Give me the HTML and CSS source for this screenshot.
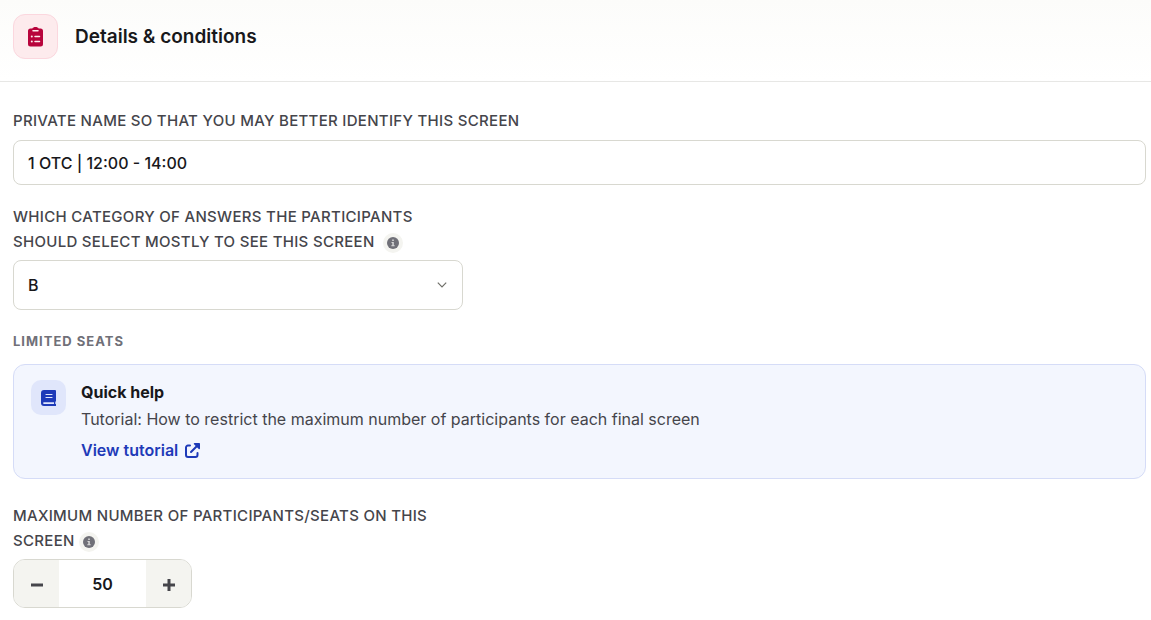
FILE: index.html
```html
<!DOCTYPE html>
<html lang="en">

<head>
    <meta charset="UTF-8">
    <meta name="viewport" content="width=device-width, initial-scale=1.0">
    <title>Details &amp; conditions</title>
    <link rel="stylesheet" href="styles.css">
</head>

<body>
    <header class="panel-header">
        <span class="panel-icon">
            <svg width="15" height="20" viewBox="0 0 15 20" aria-hidden="true">
                <path fill="#b8043c" d="M2.500 1.500h1.800C5 .5 6 0 7.500 0s2.500.5 3.200 1.500h1.800A2.500 2.500 0 0 1 15 4v13a2.500 2.500 0 0 1-2.500 2.500h-10A2.500 2.500 0 0 1 0 17V4a2.500 2.500 0 0 1 2.500-2.500z" />
                <path stroke="#fdebed" stroke-width="1.500" stroke-linecap="round" d="M5 3.800h5M7 9.500h4.500M7 14.500h4.500" />
                <circle cx="3.800" cy="9.500" r="1" fill="#fdebed" />
                <circle cx="3.800" cy="14.500" r="1" fill="#fdebed" />
            </svg>
        </span>
        <h1>Details &amp; conditions</h1>
    </header>

    <form class="panel-body">
        <div class="field">
            <label for="privateName">Private name so that you may better identify this screen</label>
            <input id="privateName" class="text-input" type="text" value="1 OTC | 12:00 - 14:00">
        </div>

        <div class="field narrow">
            <label for="category">Which category of answers the participants should select mostly to see this screen
                <span class="info">
                    <svg width="12" height="12" viewBox="0 0 12 12" aria-hidden="true">
                        <circle cx="6" cy="6" r="6" fill="#707078" />
                        <path fill="#d8d8d8" d="M5.200 2.500h1.600v1.500H5.200zM4.500 5h2.300v3.200h.9v1H4.300v-1h1V6h-.8z" />
                    </svg>
                </span>
            </label>
            <div class="select-wrap">
                <select id="category">
                    <option>A</option>
                    <option selected>B</option>
                    <option>C</option>
                </select>
                <svg class="chevron" width="10" height="6" viewBox="0 0 10 6" aria-hidden="true">
                    <path fill="none" stroke="#6f6f68" stroke-width="1.200" d="M.8.7 5 4.900 9.200.7" />
                </svg>
            </div>
        </div>

        <h2>Limited seats</h2>
        <section class="help">
            <span class="help-icon">
                <svg width="15" height="16" viewBox="0 0 15 16" aria-hidden="true">
                    <path fill="#1e3ab8" d="M3 0h11a1 1 0 0 1 1 1v9.800a1 1 0 0 1-.7 1v2.200H15V16H3a3 3 0 0 1-3-3V3a3 3 0 0 1 3-3z" />
                    <path stroke="#e0e6fb" stroke-width="1.200" stroke-linecap="round" d="M5 4.500h6M5 7.500h6" />
                    <path fill="#e0e6fb" d="M3 12.200h10v1.800H3a.9.9 0 0 1 0-1.800z" />
                </svg>
            </span>
            <div class="help-text">
                <h3>Quick help</h3>
                <p>Tutorial: How to restrict the maximum number of participants for each final screen</p>
                <a href="#tutorial">View tutorial
                    <svg width="15" height="15" viewBox="0 0 15 15" aria-hidden="true">
                        <path fill="none" stroke="#1e3ab8" stroke-width="2" stroke-linecap="round" d="M5 2.500H3a2 2 0 0 0-2 2V12a2 2 0 0 0 2 2h7.500a2 2 0 0 0 2-2v-2M6 9l6-6" />
                        <path fill="#1e3ab8" d="M9.500 0h4.700a.8.8 0 0 1 .8.800v4.700c0 .7-.8 1-1.300.5L9 1.300C8.500.8 8.800 0 9.500 0z" />
                    </svg>
                </a>
            </div>
        </section>

        <div class="field narrow">
            <label for="seats">Maximum number of participants/seats on this screen<span class="info">
                    <svg width="12" height="12" viewBox="0 0 12 12" aria-hidden="true">
                        <circle cx="6" cy="6" r="6" fill="#707078" />
                        <path fill="#d8d8d8" d="M5.200 2.500h1.600v1.500H5.200zM4.500 5h2.300v3.200h.9v1H4.300v-1h1V6h-.8z" />
                    </svg>
                </span>
            </label>
            <div class="stepper">
                <button type="button" aria-label="Decrease">
                    <svg width="12" height="12" viewBox="0 0 12 12" aria-hidden="true">
                        <path stroke="#45454b" stroke-width="3" d="M0 6h12" />
                    </svg>
                </button>
                <input id="seats" type="text" inputmode="numeric" value="50">
                <button type="button" aria-label="Increase">
                    <svg width="12" height="12" viewBox="0 0 12 12" aria-hidden="true">
                        <path stroke="#45454b" stroke-width="3" d="M0 6h12M6 0v12" />
                    </svg>
                </button>
            </div>
        </div>
    </form>
</body>

</html>
```
FILE: styles.css
```css
* {
    box-sizing: border-box;
}

body {
    margin: 0;
    background-color: #fff;
    color: #18181b;
    font-family: Inter, "Liberation Sans", sans-serif;
    font-size: 16px;
}

h1,
h2,
h3,
p {
    margin: 0;
}

.panel-header {
    display: flex;
    align-items: center;
    gap: 17px;
    padding: 14px 13px 22px;
    background: linear-gradient(#fcfcfa, #fff);
    border-bottom: 1px solid #e7e7e5;
}

.panel-icon {
    display: flex;
    align-items: center;
    justify-content: center;
    width: 45px;
    height: 45px;
    background-color: #fdebed;
    border: 1px solid #fbd7de;
    border-radius: 12px;
}

h1 {
    font-size: 19px;
    font-weight: 600;
}

.panel-body {
    padding: 26px 5px 11px 13px;
}

.field {
    display: flex;
    flex-direction: column;
    gap: 7px;
    margin-bottom: 19px;
}

.narrow {
    max-width: 450px;
    gap: 6px;
}

label {
    color: #45454b;
    font-size: 15px;
    font-weight: 500;
    line-height: 25px;
    letter-spacing: 0.3px;
    text-transform: uppercase;
}

.info {
    display: inline-flex;
    align-items: center;
    justify-content: center;
    width: 20px;
    height: 20px;
    margin-left: 4px;
    background-color: #f4f4f0;
    border-radius: 50%;
    vertical-align: middle;
}

.text-input,
select {
    width: 100%;
    height: 45px;
    padding: 0 14px;
    background-color: #fff;
    border: 1px solid #d8d8d0;
    border-radius: 8px;
    color: #18181b;
    font: 500 16px Inter, "Liberation Sans", sans-serif;
}

.select-wrap {
    position: relative;
}

select {
    display: block;
    height: 50px;
    appearance: none;
}

.chevron {
    position: absolute;
    top: 22px;
    right: 16px;
    pointer-events: none;
}

h2 {
    margin: 21px 0 13px;
    color: #707078;
    font-size: 13px;
    font-weight: 700;
    line-height: 20px;
    letter-spacing: 1px;
    text-transform: uppercase;
}

.help {
    display: flex;
    align-items: flex-start;
    gap: 15px;
    margin-bottom: 24px;
    padding: 15px 17px;
    background-color: #f3f6fe;
    border: 1px solid #d5dcf7;
    border-radius: 12px;
}

.help-icon {
    display: flex;
    align-items: center;
    justify-content: center;
    width: 35px;
    height: 35px;
    background-color: #e0e6fb;
    border-radius: 10px;
}

.help-text {
    display: flex;
    flex-direction: column;
    align-items: flex-start;
    gap: 2px;
}

h3 {
    font-size: 16px;
    font-weight: 700;
    line-height: 24px;
}

p {
    color: #45454b;
    line-height: 26px;
}

a {
    display: flex;
    align-items: center;
    gap: 7px;
    margin-top: 4px;
    color: #1e3ab8;
    font-weight: 600;
    line-height: 25px;
    text-decoration: none;
}

.stepper {
    display: flex;
    width: 179px;
    height: 49px;
    overflow: hidden;
    border: 1px solid #d8d8d0;
    border-radius: 12px;
}

.stepper button {
    display: flex;
    align-items: center;
    justify-content: center;
    width: 45px;
    padding: 2px 0 0;
    background-color: #f4f4f0;
    border: none;
    cursor: pointer;
}

.stepper input {
    flex: 1;
    min-width: 0;
    padding: 0;
    background-color: #fff;
    border: none;
    color: #18181b;
    font: 600 16px Inter, "Liberation Sans", sans-serif;
    text-align: center;
}
```
